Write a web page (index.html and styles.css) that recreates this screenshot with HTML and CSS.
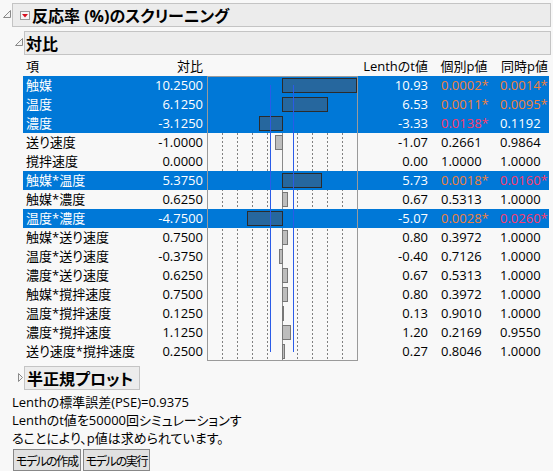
FILE: index.html
```html
<!DOCTYPE html>
<html lang="ja">
  <head>
    <meta charset="UTF-8" />
    <meta name="viewport" content="width=device-width, initial-scale=1.0" />
    <title>反応率 (%)のスクリーニング</title>
    <link rel="stylesheet" href="styles.css">
  </head>
  <body>
    <div class="report">
      <div class="outline-head">
        <span class="twisty">
          <svg width="10" height="10" viewBox="0 0 10 10"><polygon points="8.5,1.5 8.5,8.5 1.5,8.5" fill="#f4f4f4" stroke="#8a8a8a" /></svg>
        </span>
        <div class="head-box">
          <span class="red-btn">
            <svg width="10" height="9" viewBox="0 0 10 9"><rect x="0.5" y="0.5" width="9" height="8" fill="#f6f6f6" stroke="#9a9a9a" /><polygon points="2,3 8,3 5,6.5" fill="#d81020" /></svg>
          </span>
          反応率 (%)のスクリーニング
        </div>
      </div>

      <div class="outline-body">
        <div class="outline-head sub">
          <span class="twisty">
            <svg width="10" height="10" viewBox="0 0 10 10"><polygon points="8.5,1.5 8.5,8.5 1.5,8.5" fill="#f4f4f4" stroke="#8a8a8a" /></svg>
          </span>
          <div class="head-box">対比</div>
        </div>

        <div class="contrast">
          <div class="row head">
            <div class="c-term">項</div>
            <div class="c-val">対比</div>
            <div class="c-chart"></div>
            <div class="c-t">Lenthのt値</div>
            <div class="c-p1 h-center">個別p値</div>
            <div class="c-p2 h-center">同時p値</div>
          </div>

          <div class="tbody">
            <svg class="chart-grid" width="151" height="285" viewBox="0 0 151 285">
              <g stroke="#808080" stroke-dasharray="2 2">
                <line x1="15.5" y1="1" x2="15.5" y2="284" />
                <line x1="30.5" y1="1" x2="30.5" y2="284" />
                <line x1="45.5" y1="1" x2="45.5" y2="284" />
                <line x1="60.5" y1="1" x2="60.5" y2="284" />
                <line x1="90.5" y1="1" x2="90.5" y2="284" />
                <line x1="105.5" y1="1" x2="105.5" y2="284" />
                <line x1="120.5" y1="1" x2="120.5" y2="284" />
                <line x1="135.5" y1="1" x2="135.5" y2="284" />
              </g>
              <line x1="75.5" y1="1" x2="75.5" y2="284" stroke="#8a8a8a" />
            </svg>

            <div class="row sel">
              <div class="c-term">触媒</div>
              <div class="c-val">10.2500</div>
              <div class="c-chart"><span class="bar" style="left:75px;width:75px"></span></div>
              <div class="c-t">10.93</div>
              <div class="c-p1 p-hi">0.0002*</div>
              <div class="c-p2 p-hi">0.0014*</div>
            </div>
            <div class="row sel">
              <div class="c-term">温度</div>
              <div class="c-val">6.1250</div>
              <div class="c-chart"><span class="bar" style="left:75px;width:46px"></span></div>
              <div class="c-t">6.53</div>
              <div class="c-p1 p-hi">0.0011*</div>
              <div class="c-p2 p-hi">0.0095*</div>
            </div>
            <div class="row sel">
              <div class="c-term">濃度</div>
              <div class="c-val">-3.1250</div>
              <div class="c-chart"><span class="bar" style="left:52px;width:24px"></span></div>
              <div class="c-t">-3.33</div>
              <div class="c-p1 p-mid">0.0138*</div>
              <div class="c-p2">0.1192</div>
            </div>
            <div class="row">
              <div class="c-term">送り速度</div>
              <div class="c-val">-1.0000</div>
              <div class="c-chart"><span class="bar" style="left:68px;width:8px"></span></div>
              <div class="c-t">-1.07</div>
              <div class="c-p1">0.2661</div>
              <div class="c-p2">0.9864</div>
            </div>
            <div class="row">
              <div class="c-term">撹拌速度</div>
              <div class="c-val">0.0000</div>
              <div class="c-chart"></div>
              <div class="c-t">0.00</div>
              <div class="c-p1">1.0000</div>
              <div class="c-p2">1.0000</div>
            </div>
            <div class="row sel">
              <div class="c-term">触媒*温度</div>
              <div class="c-val">5.3750</div>
              <div class="c-chart"><span class="bar" style="left:75px;width:40px"></span></div>
              <div class="c-t">5.73</div>
              <div class="c-p1 p-hi">0.0018*</div>
              <div class="c-p2 p-mid">0.0160*</div>
            </div>
            <div class="row">
              <div class="c-term">触媒*濃度</div>
              <div class="c-val">0.6250</div>
              <div class="c-chart"><span class="bar" style="left:75px;width:6px"></span></div>
              <div class="c-t">0.67</div>
              <div class="c-p1">0.5313</div>
              <div class="c-p2">1.0000</div>
            </div>
            <div class="row sel">
              <div class="c-term">温度*濃度</div>
              <div class="c-val">-4.7500</div>
              <div class="c-chart"><span class="bar" style="left:40px;width:36px"></span></div>
              <div class="c-t">-5.07</div>
              <div class="c-p1 p-hi">0.0028*</div>
              <div class="c-p2 p-mid">0.0260*</div>
            </div>
            <div class="row">
              <div class="c-term">触媒*送り速度</div>
              <div class="c-val">0.7500</div>
              <div class="c-chart"><span class="bar" style="left:75px;width:6px"></span></div>
              <div class="c-t">0.80</div>
              <div class="c-p1">0.3972</div>
              <div class="c-p2">1.0000</div>
            </div>
            <div class="row">
              <div class="c-term">温度*送り速度</div>
              <div class="c-val">-0.3750</div>
              <div class="c-chart"><span class="bar" style="left:72px;width:4px"></span></div>
              <div class="c-t">-0.40</div>
              <div class="c-p1">0.7126</div>
              <div class="c-p2">1.0000</div>
            </div>
            <div class="row">
              <div class="c-term">濃度*送り速度</div>
              <div class="c-val">0.6250</div>
              <div class="c-chart"><span class="bar" style="left:75px;width:6px"></span></div>
              <div class="c-t">0.67</div>
              <div class="c-p1">0.5313</div>
              <div class="c-p2">1.0000</div>
            </div>
            <div class="row">
              <div class="c-term">触媒*撹拌速度</div>
              <div class="c-val">0.7500</div>
              <div class="c-chart"><span class="bar" style="left:75px;width:6px"></span></div>
              <div class="c-t">0.80</div>
              <div class="c-p1">0.3972</div>
              <div class="c-p2">1.0000</div>
            </div>
            <div class="row">
              <div class="c-term">温度*撹拌速度</div>
              <div class="c-val">0.1250</div>
              <div class="c-chart"><span class="bar" style="left:75px;width:2px"></span></div>
              <div class="c-t">0.13</div>
              <div class="c-p1">0.9010</div>
              <div class="c-p2">1.0000</div>
            </div>
            <div class="row">
              <div class="c-term">濃度*撹拌速度</div>
              <div class="c-val">1.1250</div>
              <div class="c-chart"><span class="bar" style="left:75px;width:9px"></span></div>
              <div class="c-t">1.20</div>
              <div class="c-p1">0.2169</div>
              <div class="c-p2">0.9550</div>
            </div>
            <div class="row">
              <div class="c-term">送り速度*撹拌速度</div>
              <div class="c-val">0.2500</div>
              <div class="c-chart"><span class="bar" style="left:75px;width:3px"></span></div>
              <div class="c-t">0.27</div>
              <div class="c-p1">0.8046</div>
              <div class="c-p2">1.0000</div>
            </div>

            <svg class="chart-frame" width="151" height="285" viewBox="0 0 151 285">
              <rect x="0.5" y="0.5" width="150" height="284" fill="none" stroke="#9a9a9a" />
              <line x1="63.5" y1="9" x2="63.5" y2="276" stroke="#2a5be8" />
              <line x1="86.5" y1="9" x2="86.5" y2="276" stroke="#2a5be8" />
            </svg>
          </div>
        </div>

        <div class="outline-head sub closed">
          <span class="twisty">
            <svg width="10" height="10" viewBox="0 0 10 10"><polygon points="4.5,0.5 8.5,4.5 4.5,8.5" fill="#f4f4f4" stroke="#8a8a8a" /></svg>
          </span>
          <div class="head-box">半正規プロット</div>
        </div>

        <p class="note">
          Lenthの標準誤差(PSE)=0.9375<br>
          Lenthのt値を50000回シミュレーションす<br>
          ることにより、p値は求められています。
        </p>

        <div class="buttons">
          <button type="button">モデルの作成</button>
          <button type="button">モデルの実行</button>
        </div>
      </div>
    </div>
  </body>
</html>
```

FILE: styles.css
```css
body {
  margin: 0;
  background: #f8f8f8;
  font-family: "Open Sans", "Noto Sans CJK JP", sans-serif;
  font-size: 13px;
  font-feature-settings: "palt";
  color: #000;
}

.report {
  padding-top: 3px;
}

.outline-head {
  display: flex;
  align-items: center;
  height: 24px;
}

.twisty {
  flex: none;
  width: 12px;
  display: flex;
  padding-left: 2px;
  box-sizing: border-box;
  margin-top: -3px;
}

.head-box {
  flex: 1;
  height: 24px;
  box-sizing: border-box;
  margin-right: 2px;
  padding-left: 7px;
  display: flex;
  align-items: center;
  border: 1px solid #c4c4c4;
  background: #ececec;
  font-size: 16px;
  font-weight: bold;
  white-space: nowrap;
}

.red-btn {
  display: flex;
  margin-right: 2px;
}

.outline-body {
  margin-left: 12px;
}

.sub {
  margin-top: 4px;
}

.sub .head-box {
  padding-left: 1px;
}

.closed {
  margin-top: 5px;
}

.closed .twisty {
  margin-top: 0;
}

.closed .head-box {
  flex: none;
  width: 116px;
  padding-left: 2px;
}

/* contrast table */

.contrast {
  margin-left: 11px;
  width: 526px;
}

.row {
  position: relative;
  display: grid;
  grid-template-columns: 107px 77px 150px 71px 72px 49px;
  height: 19px;
  line-height: 19px;
  white-space: nowrap;
}

.row.head {
  height: 20px;
  line-height: 20px;
  margin-top: 1px;
}

.row.sel {
  background: #0078d7;
  color: #fff;
}

.c-term {
  padding-left: 3px;
}

.c-val {
  text-align: right;
  padding-right: 4px;
}

.c-chart {
  position: relative;
}

.c-t {
  text-align: right;
}

.c-p1 {
  padding-left: 13px;
}

.h-center {
  padding-left: 0;
  text-align: center;
}

.p-hi {
  color: #f0803c;
}

.p-mid {
  color: #ff3a6c;
}

.tbody {
  position: relative;
}

.chart-grid,
.chart-frame {
  position: absolute;
  left: 184px;
  top: 0;
}

.chart-frame {
  pointer-events: none;
}

.bar {
  position: absolute;
  top: 2px;
  height: 15px;
  box-sizing: border-box;
  border: 1px solid #777;
  background: #bdbdbd;
}

.sel .bar {
  border-color: #2b2b2b;
  background: #26679e;
}

/* footer */

.note {
  margin: 3px 0 0;
  line-height: 18px;
}

.buttons {
  display: flex;
  gap: 2px;
  margin: 2px 0 0 1px;
}

button {
  height: 22px;
  padding: 0 2px;
  font-family: "Noto Sans CJK JP", sans-serif;
  font-size: 12px;
  font-feature-settings: "palt";
  letter-spacing: -1.3px;
  color: #000;
  background: #e1e1e1;
  border: 1px solid #888;
  border-radius: 0;
}
```
